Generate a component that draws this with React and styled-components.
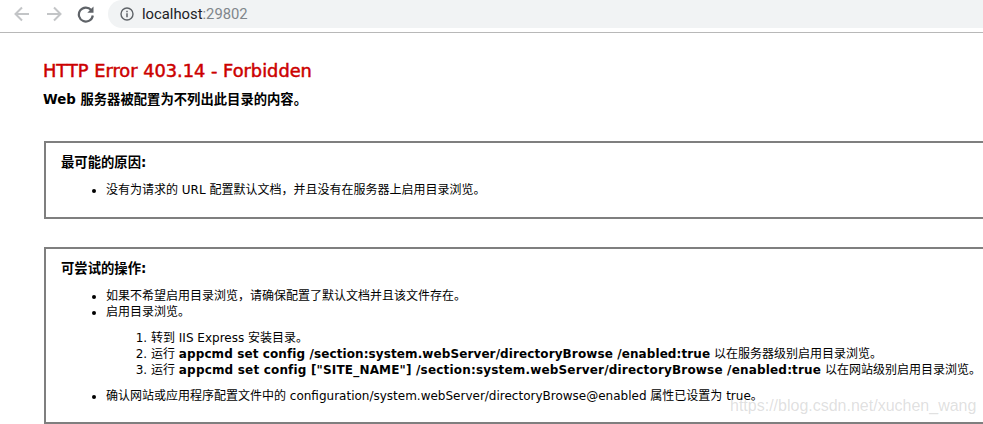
import React from 'react';
import styled, { createGlobalStyle } from 'styled-components';

const Global = createGlobalStyle`
  html, body { margin: 0; padding: 0; background: #fff; }
  body { width: 983px; height: 424px; overflow: hidden; }
`;

const Page = styled.div`
  position: relative;
  width: 983px;
  height: 424px;
  overflow: hidden;
  font-family: "DejaVu Sans", "Noto Sans CJK SC", sans-serif;
  color: #000;
`;

const Toolbar = styled.div`
  display: flex;
  align-items: flex-start;
  height: 32px;
  padding-left: 13px;
  border-bottom: 1px solid #b8b8b8;
  background: #fff;
`;

const NavIcon = styled.svg`
  width: 18px;
  height: 18px;
  margin: 5px ${(p) => p.$gap}px 0 0;
  flex: none;
`;

const AddressBar = styled.div`
  display: flex;
  align-items: center;
  flex: 1;
  height: 28px;
  margin-left: 13px;
  padding-left: 12px;
  background: #f1f3f4;
  border-radius: 14px 0 0 14px;
  font-family: "Roboto", sans-serif;
  font-size: 14.8px;
  color: #80868b;
`;

const Host = styled.span`
  color: #202124;
  margin-left: 8px;
`;

const Content = styled.div`
  padding: 28px 0 0 43px;
`;

const Title = styled.h1`
  margin: 0;
  font-size: 17.8px;
  line-height: 20px;
  font-weight: 400;
  color: #cc0000;
  -webkit-text-stroke: 0.5px #cc0000;
`;

const Subtitle = styled.h2`
  margin: 10px 0 0;
  font-size: 13.33px;
  line-height: 17px;
  font-weight: 700;
`;

const Box = styled.section`
  box-sizing: border-box;
  width: 1000px;
  height: ${(p) => p.$height}px;
  margin: ${(p) => p.$top}px 0 0 1px;
  padding: 12px 0 0 15px;
  border: 2px solid #7f7f7f;
  border-right: none;
`;

const BoxTitle = styled.h3`
  margin: 0;
  font-size: 13.33px;
  line-height: 15px;
  font-weight: 700;
`;

const List = styled.ul`
  margin: 12px 0 0;
  padding: 0 0 0 45px;
  font-size: 12px;
  line-height: 16px;
  white-space: nowrap;
`;

const Steps = styled.ol`
  margin: 10px 0 10px;
  padding: 0 0 0 45px;
`;

const Command = styled.b`
  letter-spacing: ${(p) => p.$spacing}px;
`;

const Watermark = styled.div`
  position: absolute;
  left: 730px;
  top: 395px;
  font-family: "Liberation Sans", sans-serif;
  font-size: 16px;
  line-height: 22px;
  color: rgba(150, 150, 150, 0.3);
  white-space: nowrap;
`;

function App() {
  return (
    <Page>
      <Global />
      <Toolbar>
        <NavIcon $gap={14} viewBox="0 0 18 18" fill="none" stroke="#c3c5c7" strokeWidth="2">
          <path d="M16 9H3M9 2.500 2.500 9 9 15.500" />
        </NavIcon>
        <NavIcon $gap={14} viewBox="0 0 18 18" fill="none" stroke="#c3c5c7" strokeWidth="2">
          <path d="M2 9h13M9 2.500 15.500 9 9 15.500" />
        </NavIcon>
        <NavIcon $gap={0} viewBox="0 0 18 18" fill="none">
          <path d="M14.200 5A7 7 0 1 0 15.800 10.500" stroke="#5f6368" strokeWidth="2.200" />
          <path d="M16.500 1.500v6.200h-6.200z" fill="#5f6368" />
        </NavIcon>
        <AddressBar>
          <svg width="14" height="14" viewBox="0 0 14 14" fill="none">
            <circle cx="7" cy="7" r="6" stroke="#5f6368" strokeWidth="1.400" />
            <path d="M7 6.200v4M7 3.800v1.400" stroke="#5f6368" strokeWidth="1.500" />
          </svg>
          <Host>localhost</Host>:29802
        </AddressBar>
      </Toolbar>
      <Content>
        <Title>HTTP Error 403.14 - Forbidden</Title>
        <Subtitle>Web 服务器被配置为不列出此目录的内容。</Subtitle>
        <Box $top={33} $height={78}>
          <BoxTitle>最可能的原因:</BoxTitle>
          <List>
            <li>没有为请求的 URL 配置默认文档，并且没有在服务器上启用目录浏览。</li>
          </List>
        </Box>
        <Box $top={28} $height={177}>
          <BoxTitle>可尝试的操作:</BoxTitle>
          <List>
            <li>如果不希望启用目录浏览，请确保配置了默认文档并且该文件存在。</li>
            <li>
              启用目录浏览。
              <Steps>
                <li>转到 IIS Express 安装目录。</li>
                <li>运行 <Command $spacing={0.1}>appcmd set config /section:system.webServer/directoryBrowse /enabled:true</Command> 以在服务器级别启用目录浏览。</li>
                <li>运行 <Command $spacing={0.18}>appcmd set config ["SITE_NAME"] /section:system.webServer/directoryBrowse /enabled:true</Command> 以在网站级别启用目录浏览。</li>
              </Steps>
            </li>
            <li>确认网站或应用程序配置文件中的 configuration/system.webServer/directoryBrowse@enabled 属性已设置为 true。</li>
          </List>
        </Box>
      </Content>
      <Watermark>https://blog.csdn.net/xuchen_wang</Watermark>
    </Page>
  );
}

export default App;
